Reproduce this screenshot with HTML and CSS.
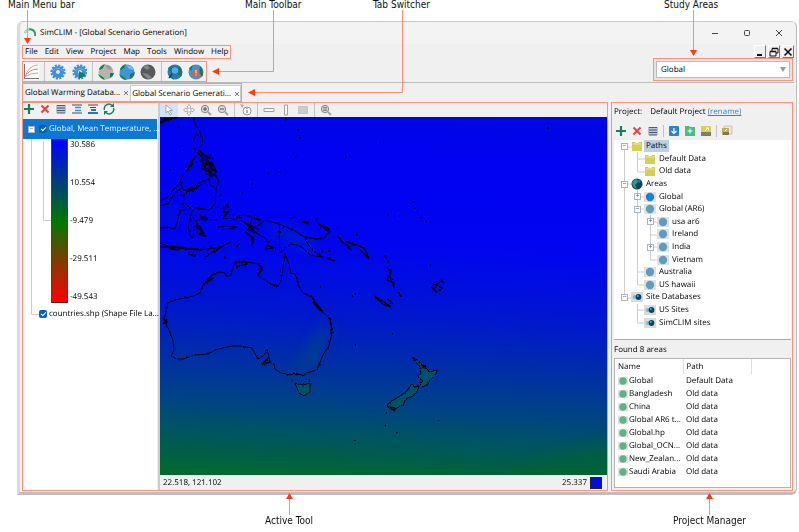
FILE: index.html
```html
<!DOCTYPE html>
<html lang="en">
<head>
<meta charset="utf-8">
<title>SimCLIM - Global Scenario Generation</title>
<link rel="stylesheet" href="styles.css">
</head>
<body>
<svg width="0" height="0" class="defs" aria-hidden="true">
  <defs>
    <symbol id="gear" viewBox="0 0 16 16"><circle cx="8" cy="8" r="6" fill="#3f8fd2"/><circle cx="8" cy="8" r="6.6" fill="none" stroke="#3f8fd2" stroke-width="2" stroke-dasharray="2.2 1.25"/><circle cx="8" cy="8" r="2" fill="#d8e8f4"/><path d="M3 7q5-5 10 0" fill="none" stroke="#6bb0e6"/></symbol>
    <symbol id="add" viewBox="0 0 12 12"><path d="M6 1v10M1 6h10" stroke="#12825a" stroke-width="2.2"/></symbol>
    <symbol id="del" viewBox="0 0 12 12"><path d="M2.5 2.5l7 7M9.500 2.500l-7 7" stroke="#e04848" stroke-width="2.2"/></symbol>
    <symbol id="list" viewBox="0 0 12 12"><path d="M1 2h10v8H1z" fill="#b9c2d0"/><path d="M2 2.500h8M2 5h8M2 7.500h8M2 10h8" stroke="#4b5b78"/></symbol>
    <symbol id="node" viewBox="0 0 12 12"><path fill="#e0e1e3" d="M0 1h12v10H0z"/><circle cx="6" cy="6" r="4.200" fill="#5f9dbd"/></symbol>
    <symbol id="area" viewBox="0 0 12 12"><path fill="#e0e1e3" d="M0 1h12v10H0z"/><circle cx="6" cy="6" r="4.400" fill="#5fb287"/></symbol>
    <symbol id="folder" viewBox="0 0 12 12"><path fill="#d3cf56" d="M1 2h3l1 1h2l1-1h3v9H1z"/><path d="M2 4h8" stroke="#eeeaa0"/></symbol>
    <symbol id="site" viewBox="0 0 12 12"><path fill="#d9dcdf" d="M0 1h12v10H0z"/><circle cx="3.500" cy="6" r="2" fill="#88bfca"/><circle cx="7.500" cy="6" r="2.900" fill="#0b4565"/><circle cx="6.800" cy="5" r="1" fill="#45b3ae"/></symbol>
    <symbol id="lens" viewBox="0 0 12 12"><circle cx="5" cy="5" r="3.700" fill="#d6d6d6" stroke="#8b8b8b"/><path d="M8 8l3 3" stroke="#a5a5a5" stroke-width="2"/></symbol>
  </defs>
</svg>
<main class="figure">
  <header class="captions top">
    <span>Main Menu bar</span><span>Main Toolbar</span><span>Tab Switcher</span><span>Study Areas</span>
  </header>

  <section class="window">
    <div class="titlebar">
      <svg class="logo" viewBox="0 0 12 12"><path d="M1 6a5 5 0 0 1 10 3" fill="none" stroke="#2f9a64" stroke-width="2"/><path d="M1 6q1-3 4-4" fill="none" stroke="#b8ddc9" stroke-width="2"/></svg>
      <span class="grow">SimCLIM - [Global Scenario Generation]</span>
      <button aria-label="Minimize"><svg viewBox="0 0 8 8"><path d="M1 4.500h6"/></svg></button>
      <button aria-label="Maximize"><svg viewBox="0 0 8 8"><rect x="1.500" y="1.500" width="5" height="5" rx="1"/></svg></button>
      <button aria-label="Close"><svg viewBox="0 0 8 8"><path d="M1 1l6 6M7 1l-6 6"/></svg></button>
    </div>

    <div class="head">
      <div class="bars">
        <nav class="menu marked">
          <button>File</button><button>Edit</button><button>View</button><button>Project</button><button>Map</button><button>Tools</button><button>Window</button><button>Help</button>
        </nav>
        <div class="toolbar marked">
          <button aria-label="Chart"><svg viewBox="0 0 16 16"><path fill="#fafafa" d="M0 0h16v16H0z"/><path d="M1.500 0v14.500H16" fill="none" stroke="#777"/><path d="M2 13q4-8 13-8" fill="none" stroke="#999"/><path d="M2 13q4-12 13-12" fill="none" stroke="#e6a08c"/><path d="M2 13q5-4 13-4" fill="none" stroke="#e6a08c"/></svg></button>
          <i class="sep"></i>
          <button aria-label="Settings"><svg viewBox="0 0 16 16"><use href="#gear"/></svg></button>
          <button aria-label="Run"><svg viewBox="0 0 16 16"><svg x="1" y="0" width="12" height="12"><use href="#gear"/></svg><path d="M8 7l7 4-7 4z" fill="#14804e"/></svg></button>
          <i class="sep"></i>
          <button aria-label="Grey globe"><svg viewBox="0 0 16 16"><circle cx="8" cy="8" r="7.500" fill="#b7b3b0"/><path d="M1 5q2-4 6-5L5 4 2 6zM0 10l5 3 2 3Q2 15 0 10zM12 9l4 0q-1 4-4 5z" fill="#14804e"/><path d="M7 1l5 1 2 4-4-1z" fill="#999"/></svg></button>
          <button aria-label="Blue globe"><svg viewBox="0 0 16 16"><circle cx="8" cy="8" r="7.500" fill="#3f93db"/><path d="M1 5q2-4 6-5L5 4 2 6zM0 10l5 3 3 3Q2 16 0 10zM11 10l5-2q-1 6-5 7z" fill="#14804e"/><path d="M7 1l5 1 3 4-5-1z" fill="#78bbed"/></svg></button>
          <button aria-label="Dark globe"><svg viewBox="0 0 16 16"><circle cx="8" cy="8" r="7.500" fill="#57595a"/><path d="M3 3l4-2 3 3-3 2zM2 9l6 1 4 4-4 1z" fill="#85888a"/></svg></button>
          <i class="sep"></i>
          <button aria-label="Search globe"><svg viewBox="0 0 16 16"><circle cx="8" cy="8" r="7.500" fill="#237fba"/><path d="M12 2q5 5 2 11l-3-3zM1 4l4-3-2 6zM2 12l4 1 1 3z" fill="#14804e"/><circle cx="8" cy="6.500" r="4" fill="#58a9df" stroke="#245c86"/><path d="M5 10l-3 4" stroke="#173f5d" stroke-width="1.500"/></svg></button>
          <button aria-label="Alert globe"><svg viewBox="0 0 16 16"><circle cx="8" cy="8" r="7.500" fill="#319ad7"/><path d="M12 2q5 5 2 11l-3-3zM1 4l4-3-2 6z" fill="#14804e"/><path d="M8 2.500l5.500 10h-11z" fill="#dd5d55"/><path d="M8 6v3.500M8 10.500v1" stroke="#eee" stroke-width="1"/></svg></button>
        </div>
      </div>
      <div class="side">
        <div class="mdi">
          <button aria-label="Minimize document"><svg viewBox="0 0 10 10"><path d="M2 8h5" stroke="#111" stroke-width="2"/></svg></button>
          <button aria-label="Restore document"><svg viewBox="0 0 10 10"><path d="M3 4V1.500h6V6H7M1 4.500h6V9H1z" fill="none" stroke="#111"/><path d="M3 1.500h6M1 4.500h6" stroke="#111" stroke-width="1.500"/></svg></button>
          <button aria-label="Close document"><svg viewBox="0 0 10 10"><path d="M1.500 1.500l7 7M8.500 1.500l-7 7" stroke="#111" stroke-width="1.600"/></svg></button>
        </div>
        <div class="picker marked"><select aria-label="Study area"><option>Global</option></select></div>
      </div>
    </div>

    <div class="tabs">
      <div class="tabset marked">
        <div class="tab"><button>Global Warming Databa...</button><button class="x" aria-label="Close tab"><svg viewBox="0 0 6 6"><path d="M1 1l4 4M5 1l-4 4"/></svg></button></div>
        <div class="tab active"><button>Global Scenario Generati...</button><button class="x" aria-label="Close tab"><svg viewBox="0 0 6 6"><path d="M1 1l4 4M5 1l-4 4"/></svg></button></div>
      </div>
    </div>

    <div class="work">
      <div class="tool marked">
        <div class="layers">
          <div class="minibar">
            <button aria-label="Add layer"><svg viewBox="0 0 12 12"><use href="#add"/></svg></button>
            <button aria-label="Remove layer"><svg viewBox="0 0 12 12"><use href="#del"/></svg></button>
            <button aria-label="Properties"><svg viewBox="0 0 12 12"><use href="#list"/></svg></button>
            <button aria-label="Move up"><svg viewBox="0 0 12 12"><path d="M1 2h10M1 10h10" stroke="#444c55"/><path d="M4 4.500h6M4 7.500h6" stroke="#3b8edb" stroke-width="1.500"/></svg></button>
            <button aria-label="Move down"><svg viewBox="0 0 12 12"><path d="M1 2h10M3 4.500h6" stroke="#444c55"/><path d="M4 7h5M1 10h10" stroke="#2878b5" stroke-width="1.800"/></svg></button>
            <button aria-label="Refresh"><svg viewBox="0 0 12 12"><path d="M1.500 7A4.500 4.500 0 0 1 9 2.500M10.500 5A4.500 4.500 0 0 1 3 9.500" fill="none" stroke="#12825a" stroke-width="1.400"/><path d="M7 4l4 0V0zM5 8H1v4z" fill="#12825a"/></svg></button>
          </div>
          <div class="layerlist">
            <svg class="branches" viewBox="0 0 40 200" aria-hidden="true"><path d="M8.500 16v179.500h9M12 10.500h6M20.500 22v79.500h8"/></svg>
            <div class="layer selected"><button class="expander" aria-label="Collapse">−</button><input type="checkbox" id="l1" checked><label for="l1">Global, Mean Temperature, ...</label></div>
            <div class="legend"><div class="ramp"></div><div class="ticks"><span>30.586</span><span>10.554</span><span>-9.479</span><span>-29.511</span><span>-49.543</span></div></div>
            <div class="layer"><input type="checkbox" id="l2" checked><label for="l2">countries.shp (Shape File La...</label></div>
          </div>
        </div>

        <div class="mapview">
          <div class="minibar maptools">
            <button class="on" aria-label="Pointer"><svg viewBox="0 0 12 12"><path d="M3 1v8l2-2 2 4 1.500-1-2-3.500h3z" fill="#fff" stroke="#8499a8" stroke-width=".8"/></svg></button>
            <button aria-label="Pan"><svg viewBox="0 0 12 12"><path d="M6 .5l2 2.500H7v2h2V4l2.500 2L9 8V7H7v2h1l-2 2.500L4 9h1V7H3v1L.5 6 3 4v1h2V3H4z" fill="#fff" stroke="#999" stroke-width=".8"/></svg></button>
            <button aria-label="Zoom in"><svg viewBox="0 0 12 12"><use href="#lens"/><path d="M3 5h4M5 3v4" stroke="#555"/></svg></button>
            <button aria-label="Zoom out"><svg viewBox="0 0 12 12"><use href="#lens"/><path d="M3 5h4" stroke="#555"/></svg></button>
            <i class="sep"></i>
            <button aria-label="Identify"><svg viewBox="0 0 12 12"><circle cx="7" cy="7" r="4" fill="#fafafa" stroke="#999"/><path d="M7 6v3M7 4v1" stroke="#666"/><path d="M0 0l4 1-2 3z" fill="#aaa"/></svg></button>
            <i class="sep"></i>
            <button aria-label="Horizontal slice"><svg viewBox="0 0 12 12"><path d="M1 4.500h10v3H1z" fill="#fafafa" stroke="#a0a0a0"/></svg></button>
            <button aria-label="Vertical slice"><svg viewBox="0 0 12 12"><path d="M4.500 1h3v10h-3z" fill="#fafafa" stroke="#a0a0a0"/></svg></button>
            <button aria-label="Select region"><svg viewBox="0 0 12 12"><path d="M1.500 2.500h9v7h-9z" fill="#ccc" stroke="#aaa" stroke-dasharray="1 1"/></svg></button>
            <i class="sep"></i>
            <button aria-label="Zoom to layer"><svg viewBox="0 0 12 12"><use href="#lens"/><path d="M3 3.500h4M3 5h4M3 6.500h4" stroke="#777" stroke-width=".8"/></svg></button>
          </div>
          <svg class="map" viewBox="160 117 447 358" preserveAspectRatio="xMidYMid slice" role="img" aria-label="Temperature map of Oceania">
            <defs>
              <linearGradient id="sea" x1="392" y1="115" x2="376" y2="477" gradientUnits="userSpaceOnUse">
                <stop offset="0" stop-color="#0006e4"/><stop offset=".12" stop-color="#0002f2"/><stop offset=".35" stop-color="#0004f0"/><stop offset=".46" stop-color="#000ee0"/><stop offset=".57" stop-color="#001aca"/><stop offset=".7" stop-color="#0030a4"/><stop offset=".79" stop-color="#00408a"/><stop offset=".88" stop-color="#005266"/><stop offset=".94" stop-color="#005c4c"/><stop offset="1" stop-color="#006832"/>
              </linearGradient>
              <filter id="soft" x="-50%" y="-50%" width="200%" height="200%"><feGaussianBlur stdDeviation="7"/></filter>
              <filter id="rough" x="0" y="0" width="100%" height="100%"><feTurbulence type="fractalNoise" baseFrequency=".4" numOctaves="2" seed="4"/><feDisplacementMap in="SourceGraphic" scale="2.500" xChannelSelector="R" yChannelSelector="G"/></filter>
            </defs>
            <path fill="url(#sea)" d="M-40 0h900v600h-900z"/>
            <g filter="url(#soft)">
              <path d="M327 318q4 26-16 46l-20 8 18-22z" fill="#005078" opacity=".7"/>
              <path d="M262 226l25 2 22 12 8 14-25-14z" fill="#0038a8" opacity=".8"/>
              <path d="M480 490q70-40 140-45v45z" fill="#00662e" opacity=".5"/>
              <path d="M160 210h18v12h-18z" fill="#0028c0" opacity=".6"/>
            </g>
            <path d="M295 383l8 2 7-2v9l-6 4-5-3zM412 383l7 3-1 4-5 6-6 2-4 7-11 5-5-4 3-4 17-9zM412 357l14 11 4 4 7-2-5 8-9 9-3-3 3-3-5-4 3-4-1-6z" fill="#005168"/>
            <g filter="url(#rough)" fill="none" stroke="#00000c" stroke-width="1">
              <path d="M285 256l3 5 3 12 4 1 2 5 2 8 4 6 9 4 3 6 6 8 9 7 1 5 1 10-3 13-6 9-6 15-10 3-4 3-7-3-6 2-9-2-6-4-1-5-6-2-6 2 5-4 2-3-2-8-3 6-6 4-6-11-12-2h-8l-9 2-8 2-7 4-13 1-12 4h-6l-6-3 3-6-1-10-5-12-4-8 2-8 2-9 7-3 18-4 7-3 3-8 10-10 7-3 5 1 2 4 4-2 2-7 2-6h12l13 2 2 7-5 4 9 6 9 5h3l3-5 2-14z"/>
              <path d="M203 285l5-5 4-5 5-2M206 283l7-5M235 263l10-2 2 3-11 3M257 263l5 5-4 7 3-6M312 297l3 5 7 9M313 302l7 9M330 318l1 7M163 318l4 4-4 2 4-5M272 284l5 3M293 373l6 2" stroke-width="1.600"/>
              <path d="M262 364q6-7 7-7l1 5-6 3-3-2M292 379v3M309 379l1 3M295 383l8 2 7-2v9l-6 4-5-3z"/>
              <path d="M412 357l7 4 3 4 4 3 4 4 7-2-1 4-4 4-4 6-5 3-3-3 3-3-5-4 3-4-1-6zM412 383l2 4 5-1-1 4-5 6-6 2-4 7-6 3-5 2-5-4 3-4 10-6 7-5z"/>
              <path d="M419 362l5 6M422 365l4 2M388 407l7 1M384 425l2 1M414 387l5-1M397 432v2M391 408l4 3M354 441h2" stroke-width="1.500"/>
              <path d="M160 123l7-3 10-3M161 120l8-1" stroke-width="2"/>
              <path d="M194 118v4l4 6 3 7M197 135l5 1 1 7-4 5-1 5 7 4 5 2M195 153l-2-8 1-7 3-4M197 152l4 5M209 180l6-7 4 9-3 6-6-3z"/>
              <path d="M199 154l4 5-3 2 7 4-1-8 7 1-2 7-8-2 4 8 5-8 4 8-7-1 2 6-6-2M207 160l6 9M201 159l12 5M205 168l9 7M193 163l-6 8M196 156l-8 11M198 150l8 6 6-1M203 163l-2 5 6 3M211 168l5 4-2 4" stroke-width="1.400"/>
              <path d="M193 163l-10 12-3 7 3 8 10 1 9-7 7-6M160 201l8-4 5-7 7-8M160 206l8-2 5-8 11-1-1 10 4 4-7 2-3 12-2 6-8-2-7 1M216 188l-1 15-5 7-15-2-4 5-1 9-2 4 2 10 3 2 1-13 5 10 7 2-7-11-4-5 7-2 15 1M191 215l7 1M195 208l5-1M186 205l5 3M199 217l8 4M173 190l10-8M184 195l3-3 8-4"/>
              <path d="M176 192l5-4M183 190l8-1M190 188l6-4M196 186l8-6M200 226l5 10M196 224l6 10M199 233l7 3M200 216l8 2" stroke-width="1.400"/>
              <path d="M226 204l-3 9 4-2-4 8 7-1M228 203v5M219 197l2-3M217 227l10-1 10 1-8 2M230 218l5 2M236 217l7-2 9 2-2 8 7 2 8-7 14 4 14 6 12 7 3 8 7 7 7 5-12-2-7-7-6-3-7-1-8 8-7-4-10 1 4-6-5-6-10-5-10-4M279.500 224v27M240 220l12 6 7 4M290 218l5-1M303 221l6 1"/>
              <path d="M223 209l4-3M224 217l5-6M236 217l6 1M244 222l10 8M248 229l9 4M252 237v8M253 236v8M269 246l6 2M236 247l4-4M245 232l7 5M254 218l7 2M218 227h6" stroke-width="1.600"/>
              <path d="M160 247l20 1 20 2 20-3 11-5M160 243l8 3 18 2M188 254l8 2M205 257l8-5 10-6M161 247l38 2M170 249l10 1M225 256v3M284 253l3 6" stroke-width="1.300"/>
              <path d="M305 237l12 2 7-1 5-6-12-9M317 223l12 6 2 3M302 222l7 1M316 219l2 2M337 235l5 7 8 5M346 241l10 5M352 243l12 5 5 10M360 250l9 9M347 247l5 3M327 258l8 3M322 249v4M318 253l4 4M328 251h3" stroke-width="1.400"/>
              <path d="M384 256l3 2M387 261l2 2M387 268l4 4-4 8 7 3 0 5-4-12M390 269v6M398 292l3 5M374 296l7 4 10 7-8-3zM387 299l6 4M432 285l5-1 6-4M431 287l6 5 5-4-5-3-4 5M441 280l3 3" stroke-width="1.200"/>
              <path d="M298 129v2M299 138h2M296 156l-1 2M253 183l-2 2M268 173h1M278 172h2M178 126h1M169 170h1M183 150h1M413 201v2M415 207v2M417 212h1M420 217l1 1M425 221h2M388 215h1M399 216h1M357 232v4M430 265h1M320 287h1M352 296h1M355 294h1M359 293v1M355 345h1M392 334h1M438 421h1M386 413h1M285 119h2M547 128h2M345 156h1M383 143h1M337 228h1M242 193h1" stroke-width="1.300"/>
            </g>
          </svg>
          <div class="status"><span>22.518, 121.102</span><span class="value">25.337<i></i></span></div>
        </div>
      </div>

      <aside class="manager marked">
        <p class="project"><span>Project:</span><span>Default Project <a href="#rename">(rename)</a></span></p>
        <div class="minibar">
          <button aria-label="Add item"><svg viewBox="0 0 12 12"><use href="#add"/></svg></button>
          <button aria-label="Remove item"><svg viewBox="0 0 12 12"><use href="#del"/></svg></button>
          <button aria-label="Item properties"><svg viewBox="0 0 12 12"><use href="#list"/></svg></button>
          <i class="sep"></i>
          <button aria-label="Import"><svg viewBox="0 0 12 12"><rect x="1" y="1" width="10" height="10" rx="1" fill="#2f80cf"/><path d="M6 3v5M3.500 6L6 8.500 8.500 6" fill="none" stroke="#fff" stroke-width="1.200"/></svg></button>
          <button aria-label="New folder"><svg viewBox="0 0 12 12"><path d="M1 1h4l1 1h5v9H1z" fill="#4eb980"/><path d="M6 3.500v5M3.500 6h5" stroke="#fff"/></svg></button>
          <button aria-label="Open folder"><svg viewBox="0 0 12 12"><path d="M1 1h10v10H1z" fill="#d9cf55"/><path d="M1 7h10v4H1z" fill="#817d60"/><path d="M5 6l3-3M6 3h2.500v2.500" stroke="#fff" fill="none"/></svg></button>
          <i class="sep"></i>
          <button aria-label="Copy folder"><svg viewBox="0 0 12 12"><path d="M3 1h8v8H3z" fill="#eee6d6" stroke="#ccc4b0"/><path d="M1 3h7v7H1z" fill="#c7b05a"/><path d="M2 7h6v3H2z" fill="#7d7668"/><path d="M4 6l2-2" stroke="#fff"/></svg></button>
        </div>
        <div class="tree">
          <svg class="branches" viewBox="0 0 80 189" aria-hidden="true"><path d="M10.500 7v151M10.500 7h8M10.500 44h8M10.500 158h8M23.500 12v20M23.500 19h9M23.500 32h9M23.500 50v95M23.500 57h9M23.500 69h9M23.500 132h9M23.500 145h9M36.500 75v45M36.500 82h8M36.500 95h8M36.500 107h8M36.500 120h8M23.500 164v19M23.500 170h9M23.500 183h9"/></svg>
          <div class="row"><button class="expander" aria-label="Collapse">−</button><svg class="ico" viewBox="0 0 12 12"><use href="#folder"/></svg><span class="current">Paths</span></div>
          <div class="row d1"><i class="expander-gap"></i><svg class="ico" viewBox="0 0 12 12"><use href="#folder"/></svg><span>Default Data</span></div>
          <div class="row d1"><i class="expander-gap"></i><svg class="ico" viewBox="0 0 12 12"><use href="#folder"/></svg><span>Old data</span></div>
          <div class="row"><button class="expander" aria-label="Collapse">−</button><svg class="ico" viewBox="0 0 12 12"><circle cx="6" cy="6" r="5.500" fill="#0c4162"/><path d="M1 5q2-4 5-4l1 3-3 3 2 4q-4-1-5-6z" fill="#2f9a88"/><path d="M7 2l3 1-2 2z" fill="#3c83bd"/></svg><span>Areas</span></div>
          <div class="row d1"><button class="expander" aria-label="Expand">+</button><svg class="ico" viewBox="0 0 12 12"><path fill="#e0e1e3" d="M0 1h12v10H0z"/><circle cx="6" cy="6" r="4.200" fill="#1b83d3"/><path d="M2 5l2-2 1 3zM8 8l2-2 0 2z" fill="#1b8a6a"/></svg><span>Global</span></div>
          <div class="row d1"><button class="expander" aria-label="Collapse">−</button><svg class="ico" viewBox="0 0 12 12"><use href="#node"/></svg><span>Global (AR6)</span></div>
          <div class="row d2"><button class="expander" aria-label="Expand">+</button><svg class="ico" viewBox="0 0 12 12"><use href="#node"/></svg><span>usa ar6</span></div>
          <div class="row d2"><i class="expander-gap"></i><svg class="ico" viewBox="0 0 12 12"><use href="#node"/></svg><span>Ireland</span></div>
          <div class="row d2"><button class="expander" aria-label="Expand">+</button><svg class="ico" viewBox="0 0 12 12"><use href="#node"/></svg><span>India</span></div>
          <div class="row d2"><i class="expander-gap"></i><svg class="ico" viewBox="0 0 12 12"><use href="#node"/></svg><span>Vietnam</span></div>
          <div class="row d1"><i class="expander-gap"></i><svg class="ico" viewBox="0 0 12 12"><use href="#node"/></svg><span>Australia</span></div>
          <div class="row d1"><i class="expander-gap"></i><svg class="ico" viewBox="0 0 12 12"><use href="#node"/></svg><span>US hawaii</span></div>
          <div class="row"><button class="expander" aria-label="Collapse">−</button><svg class="ico" viewBox="0 0 12 12"><use href="#site"/></svg><span>Site Databases</span></div>
          <div class="row d1"><i class="expander-gap"></i><svg class="ico" viewBox="0 0 12 12"><use href="#site"/></svg><span>US Sites</span></div>
          <div class="row d1"><i class="expander-gap"></i><svg class="ico" viewBox="0 0 12 12"><use href="#site"/></svg><span>SimCLIM sites</span></div>
        </div>
        <p class="found">Found 8 areas</p>
        <div class="areas">
          <table>
            <thead><tr><th>Name</th><th>Path</th><th></th></tr></thead>
            <tbody>
              <tr><td><svg class="ico" viewBox="0 0 12 12"><use href="#area"/></svg>Global</td><td>Default Data</td><td></td></tr>
              <tr><td><svg class="ico" viewBox="0 0 12 12"><use href="#area"/></svg>Bangladesh</td><td>Old data</td><td></td></tr>
              <tr><td><svg class="ico" viewBox="0 0 12 12"><use href="#area"/></svg>China</td><td>Old data</td><td></td></tr>
              <tr><td><svg class="ico" viewBox="0 0 12 12"><use href="#area"/></svg>Global AR6 t...</td><td>Old data</td><td></td></tr>
              <tr><td><svg class="ico" viewBox="0 0 12 12"><use href="#area"/></svg>Global.hp</td><td>Old data</td><td></td></tr>
              <tr><td><svg class="ico" viewBox="0 0 12 12"><use href="#area"/></svg>Global_OCN...</td><td>Old data</td><td></td></tr>
              <tr><td><svg class="ico" viewBox="0 0 12 12"><use href="#area"/></svg>New_Zealan...</td><td>Old data</td><td></td></tr>
              <tr><td><svg class="ico" viewBox="0 0 12 12"><use href="#area"/></svg>Saudi Arabia</td><td>Old data</td><td></td></tr>
            </tbody>
          </table>
        </div>
      </aside>
    </div>
  </section>

  <footer class="captions bottom"><span>Active Tool</span><span>Project Manager</span></footer>

  <svg class="arrows from-left" width="410" height="100" aria-hidden="true">
    <path class="line" d="M27.500 10v30M273.500 10v61.500H218M402.500 10v82.500H253"/>
    <path class="tip" d="M24 38h7l-3.500 6zM219 68v7l-7-3.500zM255 89v7l-7-3.500z"/>
  </svg>
  <svg class="arrows from-right" width="140" height="60" aria-hidden="true"><path class="line" d="M34.500 10v42"/><path class="tip" d="M31 50h7l-3.500 6z"/></svg>
  <svg class="arrows low-left" width="300" height="40" aria-hidden="true"><path class="line" d="M289.500 6v17"/><path class="tip" d="M286 7h7l-3.500-6z"/></svg>
  <svg class="arrows low-right" width="100" height="40" aria-hidden="true"><path class="line" d="M10.500 6v17"/><path class="tip" d="M7 7h7l-3.500-6z"/></svg>
</main>
</body>
</html>
```

FILE: styles.css
```css
* { box-sizing: border-box; }
body { margin: 0; background: #fff; font: 8px/12px "Open Sans", "Noto Sans", sans-serif; text-rendering: geometricPrecision; color: #000; }
button, select, input { font: inherit; color: inherit; margin: 0; padding: 0; text-rendering: inherit; }
button { border: 0; background: none; display: flex; align-items: center; justify-content: center; }
svg { display: block; flex: none; }
p { margin: 0; }
.defs { position: absolute; }
.grow { flex: 1; }

.figure { position: relative; min-height: 100vh; display: grid; grid-template-rows: 21px 1fr 37px; }

/* Captions around the window */
.captions { font: 10px/10px "DejaVu Sans Condensed", "DejaVu Sans", sans-serif; text-rendering: auto; color: #111; white-space: nowrap; display: grid; }
.captions.top { grid-template-columns: 237px 128px 1fr 135px; padding-left: 8px; }
.captions.bottom { grid-template-columns: 1fr 126px; padding-left: 265px; align-items: end; padding-bottom: 6px; }
.arrows { position: absolute; pointer-events: none; }
.from-left { left: 0; top: 0; }
.from-right { right: 0; top: 0; }
.low-left { left: 0; bottom: 0; }
.low-right { right: 0; bottom: 0; }
.line { fill: none; stroke: #ff8c73; }
.tip { fill: #ff3a0c; }
.marked { border: 1px solid #fb937c; }

/* Application window */
.window { margin: 0 2px 0 17px; border: 1px solid #bdbdbd; border-width: 1px 1px 3px 3px; border-left-color: #dadada; border-top-color: #c8c8c8; border-radius: 6px 6px 6px 0; padding: 0 2px 1px; background: #f0f0f0; display: flex; flex-direction: column; }
.titlebar { display: flex; align-items: center; height: 22px; gap: 4px; padding: 0 1px 0 2px; background: #f3f3f3; }
.logo { width: 12px; height: 12px; }
.titlebar button { width: 28px; height: 20px; }
.titlebar button svg { width: 8px; height: 8px; fill: none; stroke: #444; }

.head { display: flex; justify-content: space-between; border-bottom: 1px solid #bcbcbc; height: 39px; padding-top: 1px; }
.bars { display: flex; flex-direction: column; gap: 2px; align-items: flex-start; }
.menu { display: flex; gap: 7px; height: 14px; padding: 0 2px; }
.toolbar { display: flex; align-items: center; height: 21px; gap: 5px; padding-right: 2px; }
.toolbar svg { width: 16px; height: 16px; }
.sep { width: 1px; align-self: stretch; background: #c2c2c2; }
.side { display: flex; flex-direction: column; align-items: flex-end; }
.mdi { display: flex; gap: 2px; height: 13px; }
.mdi button { width: 12px; border: 1px solid #999; border-color: #fff #777 #777 #fff; }
.mdi svg { width: 10px; height: 10px; }
.picker { position: relative; width: 140px; height: 23px; padding: 2px; background: #e4e4e4; margin-right: 1px; }
.picker::after { content: ""; position: absolute; right: 6px; top: 8px; border: 3px solid transparent; border-top: 5px solid #999; border-bottom: 0; pointer-events: none; }
select { appearance: none; width: 100%; height: 17px; border: 1px solid #bbb; border-radius: 0; padding: 0 4px; background: #fff; }

.tabs { display: flex; height: 19px; }
.tabset { display: flex; padding: 1px 0 0; }
.tab { display: flex; align-items: center; gap: 2px; padding: 0 1px 0 2px; white-space: nowrap; }
.tab.active { background: #fff; border: 1px solid #ccc; border-bottom: 0; padding: 0 0 0 1px; }
.x { width: 7px; height: 12px; }
.x svg { width: 6px; height: 6px; stroke: #777; }

/* Work area */
.work { flex: 1; display: grid; grid-template-columns: 1fr 182px; gap: 3px; padding-right: 1px; min-height: 0; }
.tool { display: grid; grid-template-columns: 137px 1fr; min-width: 0; min-height: 0; }
.minibar { display: flex; align-items: center; height: 14px; gap: 4px; }
.minibar svg { width: 12px; height: 12px; }
.minibar .sep { margin: 0 3px; }
.layers { display: flex; flex-direction: column; border-right: 2px solid #ccc; }
.layers .minibar { height: 16px; align-items: flex-start; }
.layerlist { position: relative; flex: 1; background: #fff; margin-right: 1px; }
.branches { position: absolute; left: 0; top: 0; fill: none; stroke: #ccc; }
.layerlist .branches { width: 40px; height: 200px; }
.layer { position: relative; display: flex; align-items: center; height: 20px; gap: 2px; padding-left: 16px; white-space: nowrap; }
.layer.selected { background: #0b78d5; color: #e2f2ff; padding-left: 4px; }
input[type="checkbox"] { appearance: none; flex: none; width: 8px; height: 8px; border-radius: 2px; background: #0a62ac; position: relative; }
input[type="checkbox"]::after { content: ""; position: absolute; left: 2px; top: 2px; width: 4px; height: 2px; border: solid #fff; border-width: 0 0 1px 1px; transform: rotate(-45deg); }
.expander { flex: none; width: 7px; height: 7px; border: 1px solid #a8b4c0; background: #fff; color: #456; line-height: 5px; font-size: 7px; }
.selected .expander { margin: 0 2px 0 1px; }
.legend { position: relative; display: flex; gap: 2px; height: 164px; padding-left: 28px; margin-bottom: 1px; }
.ramp { width: 17px; border: 1px solid #333; border-color: #223 #444 #611; background: linear-gradient(#00f, #007800 50%, #f00); }
.ticks { display: flex; flex-direction: column; justify-content: space-between; }

.mapview { display: flex; flex-direction: column; min-width: 0; min-height: 0; }
.maptools { gap: 5px; }
.maptools .sep { margin: 0; }
.maptools button { height: 14px; }
.maptools .on { width: 18px; background: #cfe6f7; }
.map { flex: 1; width: 100%; min-height: 0; height: 0; }
.status { display: flex; justify-content: space-between; align-items: center; height: 15px; padding: 0 5px 0 3px; }
.value { display: flex; align-items: center; gap: 3px; }
.value i { width: 12px; height: 12px; background: #000ee0; border: 1px solid #223; }

/* Project manager */
.manager { display: flex; flex-direction: column; padding: 3px 1px 2px 2px; min-height: 0; }
.project { display: flex; gap: 8px; }
.project a { color: #2d83cc; }
.manager .minibar { height: 18px; margin-top: 4px; padding-left: 1px; }
.manager .minibar .sep { height: 12px; align-self: center; margin: 0; }
.tree { position: relative; background: #fff; border-bottom: 1px solid #aaa; padding-bottom: 10px; display: grid; grid-template-rows: repeat(15, 1fr); height: 200px; flex: none; }
.tree .branches { width: 80px; height: 189px; }
.row { position: relative; display: flex; align-items: center; gap: 3px; padding-left: 7px; white-space: nowrap; min-height: 0; }
.d1 { padding-left: 20px; }
.d2 { padding-left: 33px; }
.expander-gap { width: 7px; }
.ico { width: 12px; height: 12px; }
.current { background: #c0cfdf; padding: 0 2px; margin-left: -2px; }
.found { margin: 4px 0 2px; }
.areas { flex: 1; background: #fff; border: 1px solid #b5b5b5; }
table { width: 100%; border-collapse: collapse; table-layout: fixed; }
th, td { padding: 0 3px; height: 13px; text-align: left; font-weight: 400; white-space: nowrap; line-height: 13px; }
th { height: 15px; border-right: 1px solid #ddd; }
th:last-child { border: 0; }
th:nth-child(1), th:nth-child(2) { width: 68px; }
td:first-child { display: flex; align-items: center; gap: 1px; }
td .ico { width: 10px; height: 12px; }
```
